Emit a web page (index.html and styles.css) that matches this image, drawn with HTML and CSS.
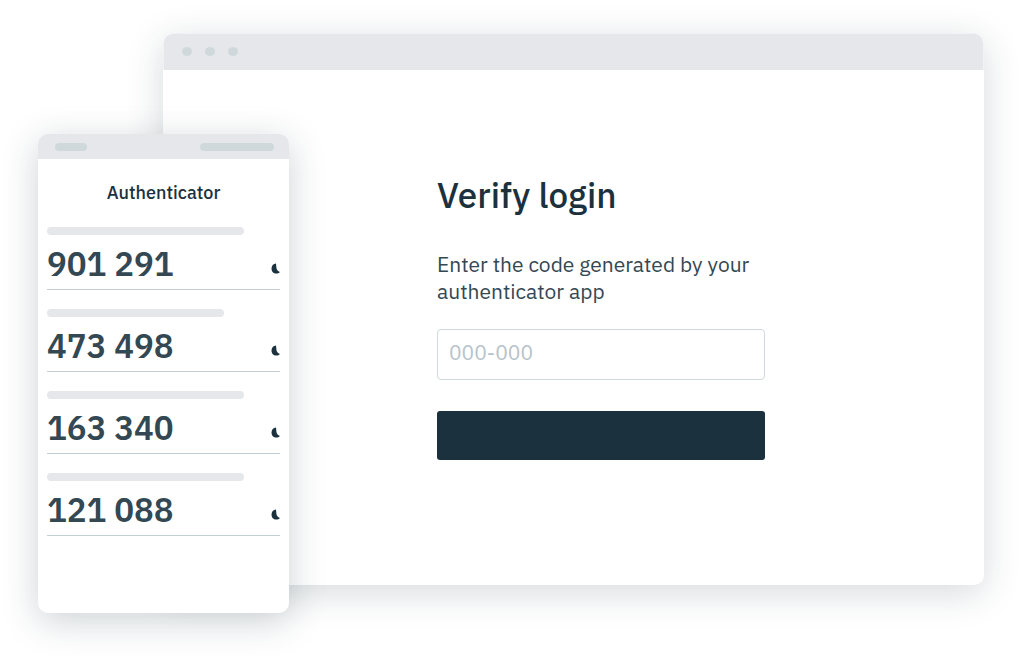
FILE: index.html
```html
<!DOCTYPE html>
<html lang="en">

<head>
    <meta charset="UTF-8">
    <meta name="viewport" content="width=device-width, initial-scale=1.0">
    <title>Verify login</title>
    <link rel="stylesheet" href="styles.css">
</head>

<body>
    <svg width="0" height="0" class="sprite" aria-hidden="true">
        <symbol id="timer" viewBox="0 0 9 11">
            <path d="M5 .4C2.200.6.500 2.800.500 5.400c0 3 2 5.100 4.700 5.100 1.500 0 2.900-.5 3.700-1.500C6.900 8.200 5.400 6.800 5.400 4.600z" />
        </symbol>
    </svg>

    <main class="stage">
        <!-- browser window -->
        <section class="browser">
            <div class="browser-bar">
                <span class="dot"></span>
                <span class="dot"></span>
                <span class="dot"></span>
            </div>
            <form class="login">
                <h1>Verify login</h1>
                <label for="code">Enter the code generated by your authenticator app</label>
                <input type="text" id="code" placeholder="000-000">
                <button type="button" aria-label="Verify"></button>
            </form>
        </section>

        <!-- phone -->
        <section class="phone">
            <div class="phone-bar">
                <span class="pill"></span>
                <span class="pill pill-wide"></span>
            </div>
            <h2>Authenticator</h2>
            <ul class="codes">
                <li>
                    <span class="account"></span>
                    <div class="code">901 291 <svg class="timer"><use href="#timer" /></svg></div>
                </li>
                <li>
                    <span class="account account-short"></span>
                    <div class="code">473 498 <svg class="timer"><use href="#timer" /></svg></div>
                </li>
                <li>
                    <span class="account"></span>
                    <div class="code">163 340 <svg class="timer"><use href="#timer" /></svg></div>
                </li>
                <li>
                    <span class="account"></span>
                    <div class="code">121 088 <svg class="timer"><use href="#timer" /></svg></div>
                </li>
            </ul>
        </section>
    </main>
</body>

</html>
```

FILE: styles.css
```css
* {
    box-sizing: border-box;
}

body {
    margin: 0;
    background: #fff;
    color: #1c313e;
    font-family: "IBM Plex Sans", "Noto Sans CJK JP", "Open Sans", sans-serif;
}

.sprite {
    position: absolute;
}

/* the phone shares the second column with the browser window */
.stage {
    display: grid;
    grid-template-columns: 125px 126px 1fr;
    align-items: start;
    padding: 33px 40px 44px 38px;
}

.browser,
.phone {
    grid-row: 1;
    background: #fff;
    border-radius: 10px;
    overflow: hidden;
}

.browser {
    grid-column: 2 / 4;
    box-shadow: 0 8px 36px rgba(28, 49, 62, 0.18);
}

.browser-bar {
    display: flex;
    align-items: center;
    gap: 13px;
    height: 37px;
    padding: 0 18px 2px;
    background: #e5e7eb;
    border: 1px solid #f0f3f6;
    border-bottom: 0;
    border-radius: 10px 10px 0 0;
}

.dot {
    width: 10px;
    height: 9px;
    border-radius: 50%;
    background: #cfd9db;
}

.login {
    display: flex;
    flex-direction: column;
    width: 40%;
    margin-left: 274px;
    padding: 101px 0 125px;
}

.login h1 {
    margin: 0 0 32px;
    font-size: 35px;
    font-weight: 500;
    line-height: 48px;
}

.login label {
    margin-bottom: 24px;
    color: #334853;
    font-size: 21px;
    line-height: 27px;
}

.login input {
    width: 100%;
    height: 51px;
    margin-bottom: 31px;
    padding: 0 11px 6px;
    border: 1px solid #cfd8da;
    border-radius: 4px;
    background: #fff;
    color: inherit;
    font-family: inherit;
    font-size: 21px;
}

.login input::placeholder {
    color: #b7c3cb;
    opacity: 1;
}

.login button {
    width: 100%;
    height: 49px;
    border: 0;
    border-radius: 3px;
    background: #1c313e;
    cursor: pointer;
}

.phone {
    grid-column: 1 / 3;
    margin-top: 101px;
    padding-bottom: 77px;
    box-shadow: 0 8px 36px rgba(28, 49, 62, 0.22);
}

.phone-bar {
    display: flex;
    align-items: center;
    justify-content: space-between;
    height: 25px;
    padding: 0 15px 0 17px;
    background: #e5e7eb;
}

.pill {
    width: 32px;
    height: 8px;
    border-radius: 4px;
    background: #cfd9db;
}

.pill-wide {
    width: 74px;
}

.phone h2 {
    margin: 22px 0;
    font-size: 18px;
    font-weight: 500;
    line-height: 24px;
    text-align: center;
}

.codes {
    display: grid;
    gap: 19px;
    margin: 0;
    padding: 0 9px;
    list-style: none;
}

.account {
    display: block;
    width: 197px;
    height: 8px;
    border-radius: 4px;
    background: #e5e7eb;
}

.account-short {
    width: 177px;
}

.code {
    display: flex;
    align-items: center;
    justify-content: space-between;
    height: 55px;
    padding-top: 4px;
    border-bottom: 1px solid #c3cfd6;
    color: #334853;
    font-size: 33px;
    font-weight: 600;
    line-height: 40px;
}

.timer {
    width: 9px;
    height: 11px;
    margin-top: 8px;
    fill: #1c313e;
}
```
